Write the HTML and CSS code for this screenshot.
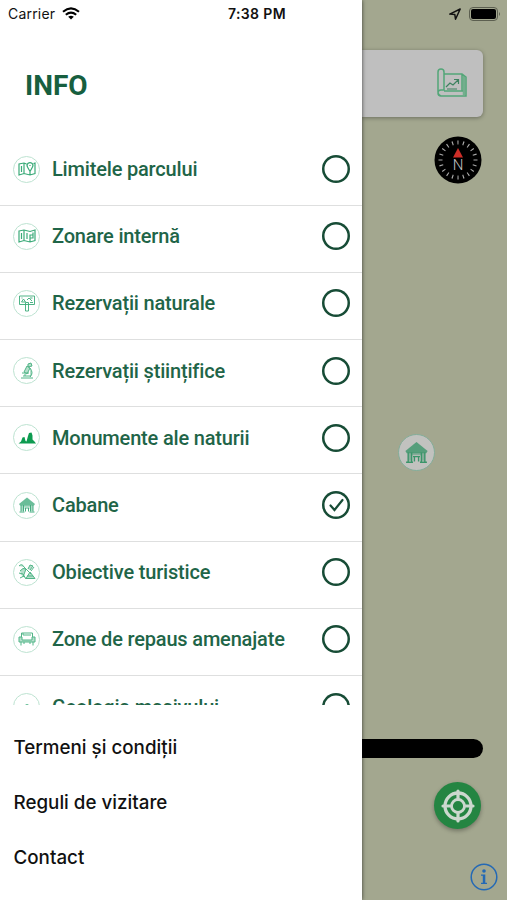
FILE: index.html
```html
<!DOCTYPE html>
<html lang="ro">
<head>
<meta charset="utf-8">
<title>Info</title>
<link rel="stylesheet" href="styles.css">
</head>
<body>
<svg class="defs" width="0" height="0" aria-hidden="true">
  <symbol id="cabin" viewBox="0 0 18 18">
    <path d="M1 8 9 1.500 17 8l-1 1.500H2Z" fill="currentColor" fill-opacity=".8"/>
    <path d="M3 9h12v6h-2.500v-4h-7v4H3Z" fill="currentColor" fill-opacity=".45"/>
    <path d="M3 9v6.500M5.500 9v6.500M15 9v6.500M12.500 9v6.500M1.500 16h5M11.500 16h5M6.500 12h5M7.500 12v3.500M10.500 12v3.500" stroke="currentColor" fill="none" stroke-width="1"/>
  </symbol>
</svg>
<div class="screen">
  <header class="status">
    <span class="carrier">Carrier</span>
    <svg class="wifi" viewBox="0 0 18 13"><path d="M1 4.700Q9-2 17 4.700M3.800 7.700Q9 3.400 14.200 7.700" fill="none" stroke="#000" stroke-width="2.100"/><path d="M6.200 9.700Q9 7.600 11.800 9.700L9 12.600Z"/></svg>
    <span class="time">7:38 PM</span>
    <svg class="arrow" viewBox="0 0 12 12"><path d="M.8 6.100 11.200 1 6.500 11.200 5.800 6.400Z" fill="none" stroke="#111" stroke-width="1.500" stroke-linejoin="round"/></svg>
    <svg class="battery" viewBox="0 0 32 14"><rect x=".5" y=".5" width="28" height="13" rx="3.500" fill="none" stroke="#5c5f50"/><rect x="2" y="2" width="25" height="10" rx="2"/><path d="M30 5q2 2 0 4Z" fill="#5c5f50"/></svg>
  </header>

  <aside class="drawer">
    <h1>INFO</h1>
    <ul class="layers">
      <li><span class="ring"><svg viewBox="0 0 18 18"><path d="M8.500 4 6 3 1 4v11l5-1.500 6 1.500 5-1.500V3l-1.500.5M6 3v10.500M12 11v4M12 11.500 9.500 7a2.900 2.900 0 1 1 5 0Z"/><path d="M3.500 6v6M12 5v1"/></svg></span><span class="name">Limitele parcului</span><i class="radio"></i></li>
      <li><span class="ring"><svg viewBox="0 0 18 18"><path d="M1 4 6 3l6 1.500L17 3v10.500L12 15l-6-1.500L1 15ZM6 3v10.500M3.500 6v6M9 6v6M12 15V8h3V5.500M12 11h3V8"/></svg></span><span class="name">Zonare internă</span><i class="radio"></i></li>
      <li><span class="ring"><svg class="thin" viewBox="0 0 18 18"><path d="M1.500 2h15v8.500h-15ZM7.500 8.500V17h3V8.500ZM3.500 8l2-3 2 3ZM9 6l2-2 3 3M3.500 4h1M12 4h2.500M12 8.500h3"/></svg></span><span class="name">Rezervații naturale</span><i class="radio"></i></li>
      <li><span class="ring"><svg class="soft" viewBox="0 0 18 18"><path d="M10 2l3-1 1 3-4 1ZM9 4l3 2-3 6-3-2ZM12 6q4 5 0 9M4 11h7M3 16h12M5 14h8M7 12v2"/></svg></span><span class="name">Rezervații ştiințifice</span><i class="radio"></i></li>
      <li><span class="ring"><svg class="solid" viewBox="0 0 18 18"><path d="M.5 14.500 3 12.500l1.500-4L6.500 8l1 4 1 .5L10 7l1-3 2.500-.5 1 3v4l2 2 1.500 2Z"/></svg></span><span class="name">Monumente ale naturii</span><i class="radio"></i></li>
      <li><span class="ring"><svg class="cabin"><use href="#cabin"/></svg></span><span class="name">Cabane</span><i class="radio"><svg viewBox="0 0 28 28"><path d="m8.500 14.500 4 4.500 8-10"/></svg></i></li>
      <li><span class="ring"><svg class="soft" viewBox="0 0 18 18"><path d="M1 3q3-3 5 1M2 8q3-4 6-2l-3 8M6 4l7 7M10 6l2-4 3 1-3 4M8 15.500l4-6.500 5 6.500ZM1 10l4 1 3 5M2 15l4-2M13 8l3-4M9 13h6"/></svg></span><span class="name">Obiective turistice</span><i class="radio"></i></li>
      <li><span class="ring"><svg class="soft" viewBox="0 0 18 18"><path class="line" d="M3.500 8V3h11v5M5 3v2h8"/><path d="M1 7h3v3h10V7h3v5H1ZM3 12v3.500M6 12v2M12 12v2M15 12v3.500"/></svg></span><span class="name">Zone de repaus amenajate</span><i class="radio"></i></li>
      <li><span class="ring"><svg class="soft" viewBox="0 0 18 18"><path d="M3 15 6 8q3-3 6 0l3 7Z"/></svg></span><span class="name">Geologia masivului</span><i class="radio"></i></li>
    </ul>
    <nav class="links"><a>Termeni și condiții</a><a>Reguli de vizitare</a><a>Contact</a></nav>
  </aside>

  <main class="map">
    <div class="search"><svg viewBox="0 0 32 30"><path d="M2 24V4a3 3 0 0 1 6 0v18H5a3 3 0 0 0 0 6h25v-4M8 6h18l4 3v19M26 6v17M8 23h19M5 28q-3-1-3-4" fill="none" stroke="#53a678" stroke-width="1.500"/><path d="M28 8v19" stroke="#53a678" stroke-width="2.500" stroke-opacity=".7"/><path d="m10 19 4-4 3 2 5-5M18 11.500h4.500V16M11 21h10" fill="none" stroke="#3e8260" stroke-width="1.200"/></svg></div>
    <svg class="compass" viewBox="0 0 48 48"><circle cx="24" cy="24" r="23.500"/><circle cx="24" cy="24" r="17.500" fill="none" stroke="#aaa" stroke-width="4" stroke-dasharray="1.100 4.398" pathLength="109.960" transform="rotate(-1.800 24 24)"/><path d="m24 12 5 9.500H19Z" fill="#ce2e28"/><text x="24" y="34" text-anchor="middle">N</text></svg>
    <span class="pin"><svg><use href="#cabin"/></svg></span>
    <div class="scale"></div>
    <span class="locate"><svg viewBox="0 0 34 34" fill="none" stroke="#ccd8ce"><circle cx="17" cy="17" r="13" stroke-width="3.300"/><circle cx="17" cy="17" r="6.500" stroke-width="2.800"/><path d="M17 2v8M17 24v8M2 17h8M24 17h8" stroke-width="3.200" stroke-linecap="round"/></svg></span>
    <svg class="about" viewBox="0 0 28 28"><circle cx="14" cy="14" r="12.800" fill="none" stroke="#2469b5" stroke-width="1.500"/><circle cx="14" cy="8" r="1.800" fill="#2469b5"/><path d="M11 11.500h4.300v8.300H17V21h-6v-1.200h1.800v-7H11Z" fill="#2469b5"/></svg>
  </main>
</div>
</body>
</html>
```
FILE: styles.css
```css
* { box-sizing: border-box; }
body { margin: 0; background: #a3a78f; }
.defs { position: absolute; }
.screen {
  position: relative;
  display: grid;
  grid-template-columns: 362px 1fr;
  width: 507px;
  height: 900px;
  overflow: hidden;
}

.status {
  position: absolute;
  z-index: 3;
  inset: 0 0 auto;
  display: grid;
  grid-template-columns: 54px 18px 1fr 12px 8px 32px;
  align-items: center;
  height: 27px;
  padding: 0 6px 0 8px;
  font: 500 13.500px/27px Inter, sans-serif;
  color: #111;
}
.carrier { font-weight: 400; font-size: 14px; letter-spacing: .2px; }
.wifi { width: 18px; height: 13px; }
.time {
  justify-self: center;
  margin-right: 15px;
  font-weight: 600;
  font-size: 14px;
  letter-spacing: .4px;
}
.arrow { width: 12px; height: 12px; }
.battery { grid-column: 6; width: 32px; height: 14px; }

.drawer {
  z-index: 2;
  display: flex;
  flex-direction: column;
  background: #fff;
  box-shadow: 0 0 4px rgba(0, 0, 0, .65);
}
h1 {
  height: 138.500px;
  margin: 0;
  padding: 69px 0 0 25px;
  font: 700 28px/33px Roboto, sans-serif;
  color: #175f3f;
}
.layers {
  height: 566px;
  margin: 0;
  padding: 0;
  overflow: hidden;
  list-style: none;
}
.layers li {
  display: flex;
  align-items: center;
  height: 67.200px;
  padding: 0 12px 5px 13px;
  border-bottom: 1px solid #dedfdf;
}
.ring {
  display: grid;
  place-items: center;
  width: 27px;
  height: 27px;
  margin-right: 12px;
  border: 1px solid #bde3d1;
  border-radius: 50%;
  color: #45ad80;
}
.ring svg {
  width: 18px;
  height: 18px;
  fill: none;
  stroke: #3bab79;
  stroke-width: 1.200;
}
.ring .thin { stroke-width: .9; }
.ring .soft { fill: #b5dfcc; stroke: #51b587; stroke-width: 1; }
.ring .line { fill: none; }
.ring .solid { fill: #0d9b50; stroke: none; }
.ring .cabin { stroke: none; }
.name {
  flex: 1;
  font: 500 20px/28px Roboto, sans-serif;
  letter-spacing: -.18px;
  color: #1f6548;
  white-space: nowrap;
}
.radio {
  width: 28px;
  height: 28px;
  border-radius: 50%;
  box-shadow: inset 0 0 0 2.500px #174c36;
}
.radio svg {
  display: block;
  width: 28px;
  height: 28px;
  fill: none;
  stroke: #174c36;
  stroke-width: 2.200;
  stroke-linecap: round;
}
.links {
  display: flex;
  flex-direction: column;
  gap: 27px;
  padding: 29px 0 0 13.500px;
  font: 500 18.800px/28px Inter, sans-serif;
  color: #111;
}

.map {
  display: flex;
  flex-direction: column;
  align-items: flex-end;
  padding-top: 50px;
}
.search {
  display: flex;
  align-items: center;
  justify-content: flex-end;
  width: 121px;
  height: 67px;
  margin-right: 24px;
  padding: 0 15px 2px 0;
  border-radius: 0 6px 6px 0;
  background: #bfbfbf;
  box-shadow: 0 1px 4px rgba(0, 0, 0, .35);
}
.search svg { width: 32px; height: 30px; }
.compass { width: 48px; height: 48px; margin: 19px 25px 0 0; }
.compass text { font: 300 15px Roboto, sans-serif; fill: #c4c4c4; }
.pin {
  display: grid;
  place-items: center;
  width: 37px;
  height: 37px;
  margin: 250px 72px 0 0;
  border: 1px solid #83ad99;
  border-radius: 50%;
  background: #c1c2bf;
  color: #3a956a;
}
.pin svg { width: 25px; height: 25px; }
.scale {
  width: 121px;
  height: 19px;
  margin: 268px 24px 0 0;
  border-radius: 0 10px 10px 0;
  background: #000;
}
.locate {
  display: grid;
  place-items: center;
  width: 47px;
  height: 47px;
  margin: 24px 26px 0 0;
  border-radius: 50%;
  background: #248542;
  box-shadow: 0 2px 4px rgba(0, 0, 0, .3);
}
.locate svg { width: 34px; height: 34px; }
.about { width: 28px; height: 28px; margin: 34px 9px 0 0; }
```
